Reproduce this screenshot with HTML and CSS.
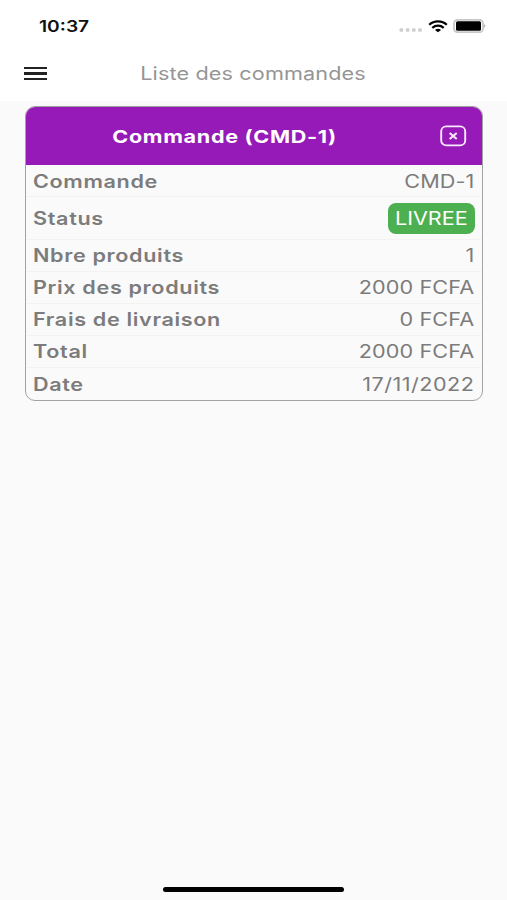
FILE: index.html
```html
<!DOCTYPE html>
<html lang="fr">

<head>
    <meta charset="UTF-8">
    <meta name="viewport" content="width=device-width, initial-scale=1.0">
    <title>Liste des commandes</title>
    <link rel="stylesheet" href="styles.css">
</head>

<body>
    <header class="header">
        <div class="status-bar">
            <span class="time wide">10:37</span>
            <div class="status-icons">
                <svg class="signal" width="24" height="4" viewBox="0 0 24 4" fill="#cfcfcf">
                    <rect x="0.5" y="0.3" width="3.6" height="3.4" rx="1" />
                    <rect x="6.8" y="0.3" width="3.6" height="3.4" rx="1" />
                    <rect x="13" y="0.3" width="3.6" height="3.4" rx="1" />
                    <rect x="19.2" y="0.3" width="3.6" height="3.4" rx="1" />
                </svg>
                <svg class="wifi" width="20" height="13" viewBox="0 0 20 13" fill="none" stroke="#000" stroke-width="2.2">
                    <path d="M1.2 4.8C6 .2 14 .2 18.8 4.8" />
                    <path d="M4.3 7.8C7.5 5 12.5 5 15.7 7.8" />
                    <path d="M7 9.9C8.7 8.5 11.3 8.5 13 9.9L10 12.3Z" fill="#000" stroke="none" />
                </svg>
                <svg class="battery" width="33" height="14" viewBox="0 0 33 14">
                    <rect x="1" y="0.8" width="29" height="12.4" rx="3.5" fill="#fff" stroke="#c8c8c8" stroke-width="1.8" />
                    <rect x="3" y="2.3" width="25" height="9.4" rx="1.5" fill="#000" />
                    <path d="M31.2 5Q33.5 7 31.2 9Z" fill="#aaa" />
                </svg>
            </div>
        </div>
        <div class="nav-bar">
            <button class="menu-btn" aria-label="Menu">
                <span></span>
                <span></span>
                <span></span>
            </button>
            <h1 class="nav-title"><span class="wide">Liste des commandes</span></h1>
        </div>
    </header>

    <main class="content">
        <div class="card">
            <div class="card-header">
                <h2><span class="wide">Commande (CMD-1)</span></h2>
                <svg class="close-icon" width="27" height="22" viewBox="0 0 27 22" fill="none" stroke="#fbeaff">
                    <rect x="1.2" y="1.4" width="24" height="19" rx="5" stroke-width="1.9" />
                    <path d="M9.7 8L16.7 14M16.7 8L9.7 14" stroke-width="2.1" />
                </svg>
            </div>
            <div class="row row-first">
                <span class="label wide">Commande</span>
                <span class="value wide">CMD-1</span>
            </div>
            <div class="row row-status">
                <span class="label wide">Status</span>
                <span class="badge"><span class="wide">LIVREE</span></span>
            </div>
            <div class="row">
                <span class="label wide">Nbre produits</span>
                <span class="value wide">1</span>
            </div>
            <div class="row">
                <span class="label wide">Prix des produits</span>
                <span class="value wide">2000 FCFA</span>
            </div>
            <div class="row">
                <span class="label wide">Frais de livraison</span>
                <span class="value wide">0 FCFA</span>
            </div>
            <div class="row">
                <span class="label wide">Total</span>
                <span class="value wide">2000 FCFA</span>
            </div>
            <div class="row">
                <span class="label wide">Date</span>
                <span class="value date wide">17/11/2022</span>
            </div>
        </div>
    </main>

    <div class="home-indicator"></div>
</body>

</html>
```
FILE: styles.css
```css
* {
    box-sizing: border-box;
}

body {
    margin: 0;
    height: 900px;
    display: flex;
    flex-direction: column;
    font-family: Inter, "Liberation Sans", sans-serif;
    font-size: 18px;
    color: #7c7c7c;
    background-color: #fafafa;
    overflow: hidden;
}

/* extended letterforms */
.wide {
    display: inline-block;
    white-space: nowrap;
    transform: scaleX(1.2);
}

.header {
    height: 101px;
    background-color: #fff;
}

.status-bar {
    height: 52px;
    padding: 0 21px 0 39px;
    display: flex;
    align-items: center;
    justify-content: space-between;
}

.time {
    font-size: 16px;
    font-weight: 600;
    color: #111;
    transform-origin: left;
}

.status-icons {
    display: flex;
    align-items: center;
}

.signal {
    margin: 7px 5px 0 0;
}

.wifi {
    margin-right: 5px;
}

.nav-bar {
    height: 43px;
    padding: 0 24px;
    display: flex;
    align-items: center;
}

.menu-btn {
    width: 23px;
    padding: 0;
    border: none;
    background: none;
    display: flex;
    flex-direction: column;
    gap: 3px;
}

.menu-btn span {
    height: 2.4px;
    background-color: #222;
}

.nav-title {
    flex: 1;
    margin: 0 23px 0 0;
    font-size: 18px;
    font-weight: 400;
    letter-spacing: 0.12px;
    color: #959595;
    text-align: center;
}

.content {
    flex: 1;
    padding: 5px 24px 0 25px;
}

.card {
    border: 1px solid #a2a2a2;
    border-radius: 10px;
    overflow: hidden;
}

.card-header {
    height: 58px;
    padding: 0 15px 0 0;
    display: flex;
    align-items: center;
    color: #fff;
    background-color: #961ab7;
}

.card-header h2 {
    flex: 1;
    margin: 0 16px 0 0;
    font-size: 18px;
    font-weight: 700;
    letter-spacing: 0.55px;
    text-align: center;
}

.row {
    height: 32px;
    padding: 0 8px 0 7px;
    display: flex;
    align-items: center;
    justify-content: space-between;
    border-bottom: 1px solid #f3f3f3;
}

.row:last-child {
    border-bottom: none;
}

.row-first {
    padding-top: 1px;
}

.row-status {
    height: 43px;
    padding-right: 7px;
}

.label {
    font-weight: 600;
    letter-spacing: 0.54px;
    transform-origin: left;
}

.value {
    letter-spacing: 0.1px;
    transform-origin: right;
}

.date {
    letter-spacing: 0.4px;
}

.badge {
    width: 87px;
    height: 31px;
    display: flex;
    align-items: center;
    justify-content: center;
    color: #fff;
    background-color: #4caf50;
    border-radius: 8px;
}

.home-indicator {
    width: 181px;
    height: 5px;
    margin: 0 auto 8px;
    border-radius: 3px;
    background-color: #000;
}
```
